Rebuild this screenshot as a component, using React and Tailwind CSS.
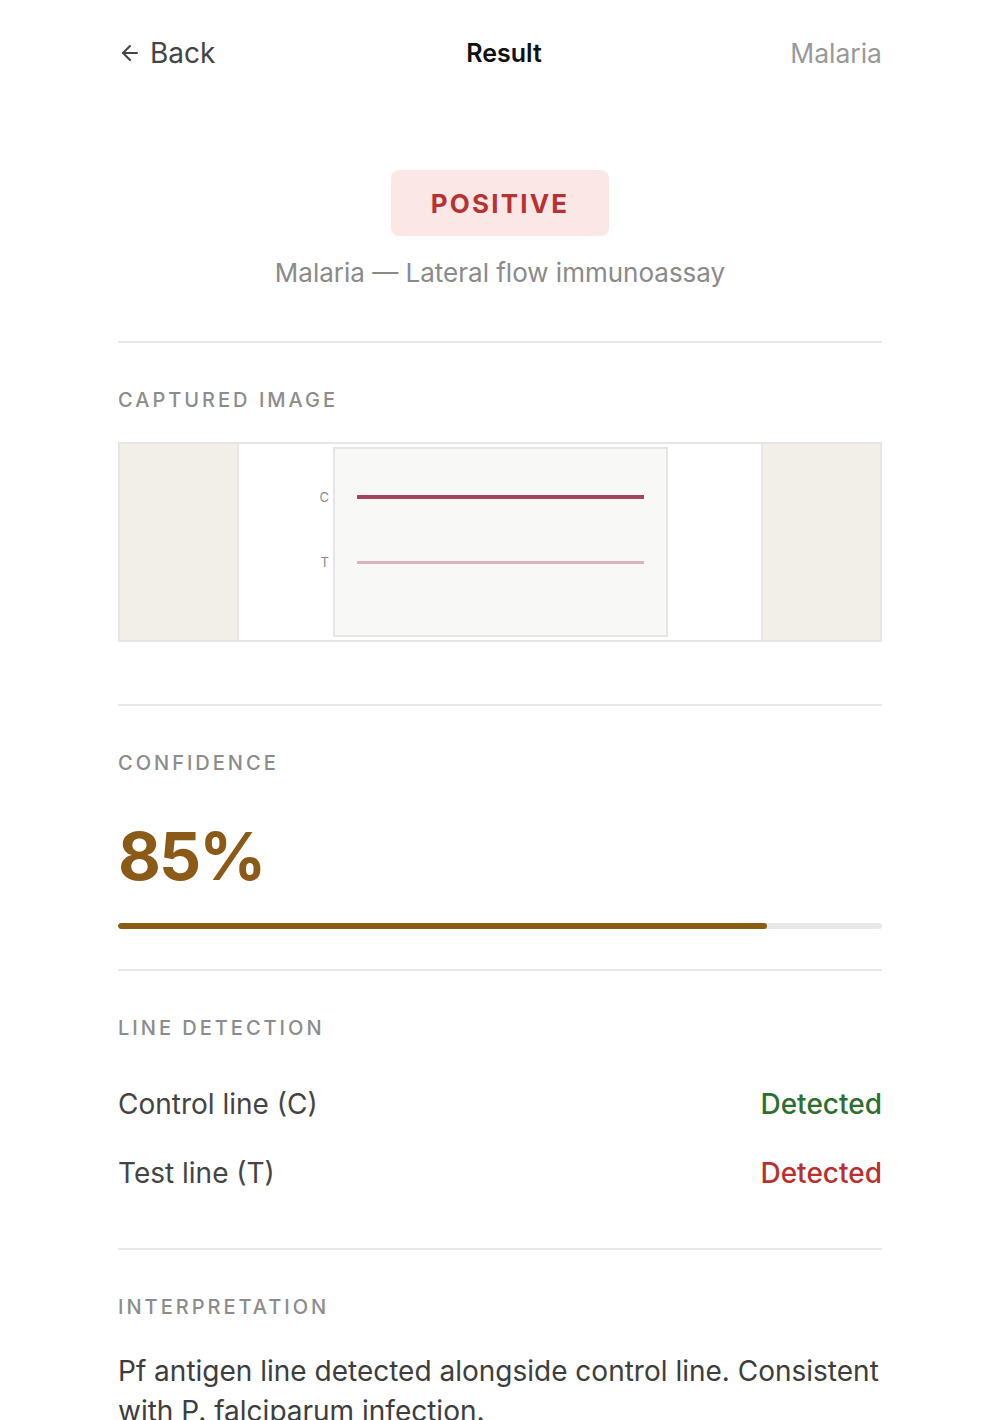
import { ArrowLeft } from 'lucide-react';

const font = { fontFamily: 'Inter, "Noto Sans", sans-serif' };

const Divider = () => <div className="h-[2px] bg-[#e8e8e8]" />;

const Label = ({ children }) => (
    <div className="text-[20px] leading-[24px] font-medium tracking-[0.15em] text-[#8c8c8c]">
        {children}
    </div>
);

const StripImage = () => (
    <div className="h-[200px] border-2 border-[#e6e6e6] flex">
        <div className="w-[119px] bg-[#f2efe9] border-r-2 border-[#e6e6e6]" />
        <div className="flex-1 bg-white flex justify-center">
            <div className="relative w-[335px] my-[3px] bg-[#f8f8f6] border-2 border-[#e5e5e5]">
                <span className="absolute -left-[15px] top-[40px] text-[13px] leading-[16px] text-[#8a8a8a]">C</span>
                <div className="absolute left-[22px] right-[22px] top-[46px] h-[4px] bg-[#a8435e]" />
                <span className="absolute -left-[14px] top-[105px] text-[13px] leading-[16px] text-[#8a8a8a]">T</span>
                <div className="absolute left-[22px] right-[22px] top-[112px] h-[3px] bg-[#dcb3bd]" />
            </div>
        </div>
        <div className="w-[119px] bg-[#f2efe9] border-l-2 border-[#e6e6e6]" />
    </div>
);

export default function App() {
    const confidence = 85;

    return (
        <div className="min-h-screen bg-white" style={font}>
            <div className="pl-[118px] pr-[112px] pt-[36px] pb-[40px]">
                {/* Header */}
                <div className="h-[34px] grid grid-cols-3 items-center">
                    <button className="flex items-center gap-[8px] text-[28px] leading-[34px] text-[#444]">
                        <ArrowLeft size={24} strokeWidth={2} />
                        <span>Back</span>
                    </button>
                    <div className="text-center pl-[8px] text-[25px] leading-[34px] font-semibold text-[#111]">Result</div>
                    <div className="text-right text-[26.5px] leading-[34px] text-[#999]">Malaria</div>
                </div>

                {/* Status */}
                <div className="flex flex-col items-center mt-[100px]">
                    <div className="h-[66px] w-[218px] rounded-[8px] bg-[#fbe8e6] flex items-center justify-center text-[26px] font-bold tracking-[0.085em] text-[#b83232]">
                        POSITIVE
                    </div>
                    <div className="mt-[20px] text-[26px] leading-[34px] text-[#8a8a8a]">
                        Malaria — Lateral flow immunoassay
                    </div>
                </div>

                <div className="mt-[51px]"><Divider /></div>

                {/* Captured image */}
                <div className="pt-[45px] pb-[62px]">
                    <Label>CAPTURED IMAGE</Label>
                    <div className="mt-[30px]"><StripImage /></div>
                </div>

                <Divider />

                {/* Confidence */}
                <div className="pt-[45px] pb-[40px]">
                    <Label>CONFIDENCE</Label>
                    <div className="mt-[41px] text-[66px] leading-[80px] font-bold tracking-[-0.03em] text-[#8a5a16]">
                        {confidence}%
                    </div>
                    <div className="mt-[27px] h-[6px] rounded-full bg-[#e8e8e8] overflow-hidden">
                        <div className="h-full rounded-full bg-[#8a5c14]" style={{ width: `${confidence}%` }} />
                    </div>
                </div>

                <Divider />

                {/* Line detection */}
                <div className="pt-[45px] pb-[57px]">
                    <Label>LINE DETECTION</Label>
                    <div className="mt-[46px] flex flex-col gap-[33px]">
                        <div className="flex items-center justify-between h-[36px] text-[28px]">
                            <span className="text-[#444]">Control line (C)</span>
                            <span className="font-medium text-[#2e6e30]">Detected</span>
                        </div>
                        <div className="flex items-center justify-between h-[36px] text-[28px]">
                            <span className="text-[#444]">Test line (T)</span>
                            <span className="font-medium text-[#b83030]">Detected</span>
                        </div>
                    </div>
                </div>

                <Divider />

                {/* Interpretation */}
                <div className="pt-[45px]">
                    <Label>INTERPRETATION</Label>
                    <p className="mt-[32px] text-[28px] leading-[40px] text-[#3d3d3d]">
                        Pf antigen line detected alongside control line. Consistent with P. falciparum infection.
                    </p>
                </div>
            </div>
        </div>
    );
}
